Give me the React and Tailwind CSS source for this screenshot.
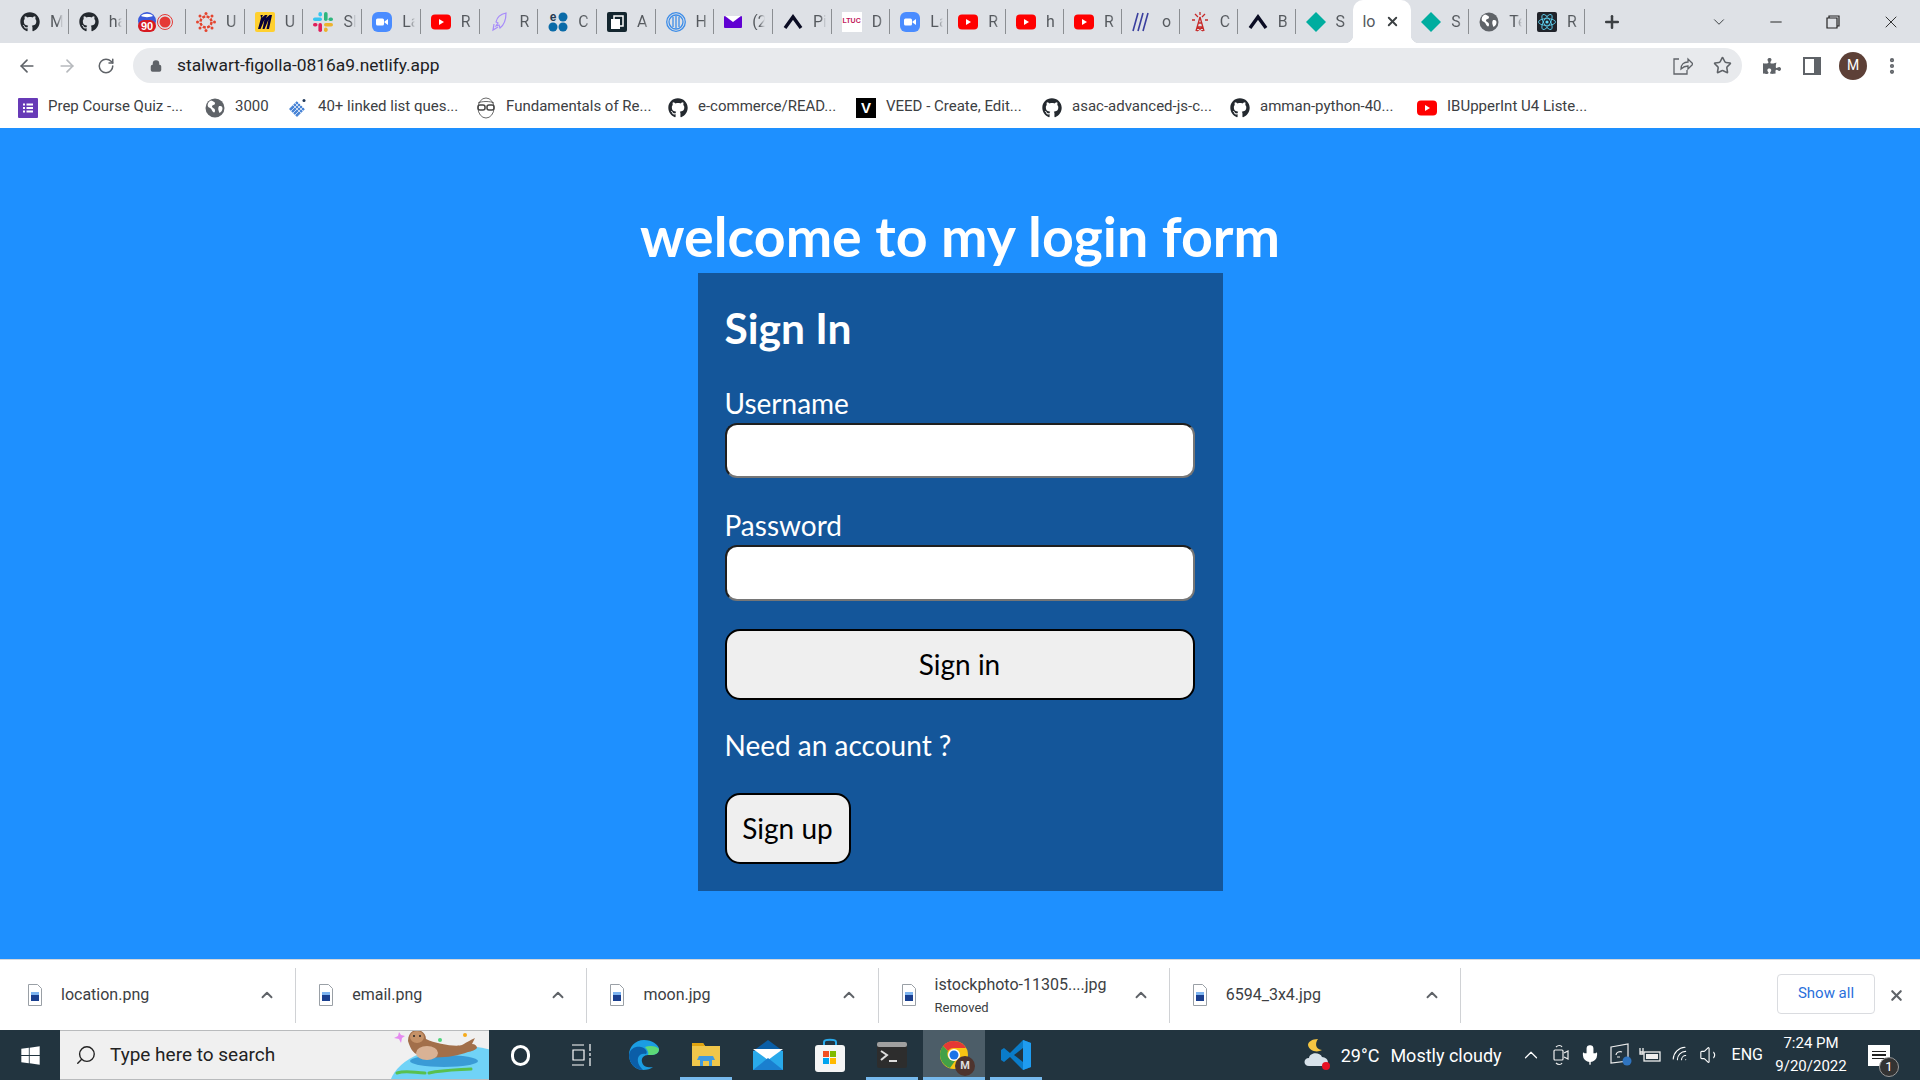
import { ArrowLeft, ArrowRight, RotateCw, Lock, Star, ChevronDown, ChevronUp, Minus, X, Plus, Search, MoreVertical, Mic, Volume1, Wifi } from "lucide-react";
import { FaGithub, FaPuzzlePiece, FaWindows } from "react-icons/fa";

function ZoomIcon() {
  return (
    <svg width="20" height="20" viewBox="0 0 20 20">
      <rect width="20" height="20" rx="6" fill="#4a8cff" />
      <rect x="4" y="6.500" width="8" height="7" rx="1.500" fill="#fff" />
      <path d="M12.500 9.500 16 7v6l-3.500-2.500z" fill="#fff" />
    </svg>
  );
}

function YoutubeIcon() {
  return (
    <svg width="20" height="20" viewBox="0 0 20 20">
      <rect y="2.500" width="20" height="15" rx="4" fill="#f00" />
      <path d="M8 7l5 3-5 3z" fill="#fff" />
    </svg>
  );
}

function Diamond() {
  return (
    <svg width="20" height="20" viewBox="0 0 20 20">
      <path d="M10 0l10 10-10 10L0 10z" fill="#00ad9f" />
    </svg>
  );
}

function Caret() {
  return (
    <svg width="20" height="20" viewBox="0 0 20 20">
      <path d="M2 16 10 5l8 11" fill="none" stroke="#0b0d24" strokeWidth="3.400" />
    </svg>
  );
}

function GlobeIcon({ size = 20 }) {
  return (
    <svg width={size} height={size} viewBox="0 0 20 20">
      <circle cx="10" cy="10" r="9.500" fill="#5f6368" />
      <path d="M6 2.500c2 1 4 1 4 3s-3 1-3 3 3 1 3 4-2 2-3 0-1-2-3-3-2-5 2-7zM14 8c2 0 3 0 3.500 2 0 2-1 4-3 5-1-2-2-5-.5-7z" fill="#fff" />
    </svg>
  );
}

function Favicon({ kind }) {
  switch (kind) {
    case "github":
      return <FaGithub size={20} color="#24292f" />;
    case "ninety":
      return (
        <span className="flex items-center">
          <svg width="20" height="20" viewBox="0 0 20 20">
            <circle cx="10" cy="9" r="9" fill="#3b5bdb" />
            <path d="M4 4c2-3 10-3 12 0-3 1.500-9 1.500-12 0z" fill="#fff" />
            <rect x="1" y="8" width="18" height="12" rx="6" fill="#d71921" />
            <text x="10" y="18" textAnchor="middle" fontSize="11" fontWeight="700" fill="#fff" fontFamily="Liberation Sans">90</text>
          </svg>
          <svg width="16" height="16" viewBox="0 0 16 16">
            <circle cx="8" cy="8" r="7.500" fill="none" stroke="#e53935" />
            <circle cx="8" cy="8" r="5.500" fill="#e53935" />
          </svg>
        </span>
      );
    case "canvas":
      return (
        <svg width="20" height="20" viewBox="0 0 20 20" fill="#e4452f">
          <circle cx="10" cy="10" r="5.500" fill="none" stroke="#e4452f" strokeWidth="2.500" strokeDasharray="3 1.300" />
          <circle cx="10" cy="1.500" r="1.500" />
          <circle cx="10" cy="18.500" r="1.500" />
          <circle cx="1.500" cy="10" r="1.500" />
          <circle cx="18.500" cy="10" r="1.500" />
          <circle cx="4" cy="4" r="1.500" />
          <circle cx="16" cy="4" r="1.500" />
          <circle cx="4" cy="16" r="1.500" />
          <circle cx="16" cy="16" r="1.500" />
        </svg>
      );
    case "miro":
      return (
        <svg width="20" height="20" viewBox="0 0 20 20">
          <rect width="20" height="20" rx="2" fill="#ffd02f" />
          <path d="M5.500 3H8L6.500 6 10 3h2.500L11 6l3.500-3H17l-3 14h-2.500l2-9.500-4 9.500H7.500l2-9.500-4 9.500H3L6 6z" fill="#050038" />
        </svg>
      );
    case "slack":
      return (
        <svg width="20" height="20" viewBox="0 0 20 20">
          <g fill="#36c5f0">
            <rect x="0" y="5.400" width="9" height="3.600" rx="1.800" />
            <rect x="5.400" y="0" width="3.600" height="4.500" rx="1.800" />
          </g>
          <g fill="#2eb67d">
            <rect x="11" y="0" width="3.600" height="9" rx="1.800" />
            <rect x="15.500" y="5.400" width="4.500" height="3.600" rx="1.800" />
          </g>
          <g fill="#ecb22e">
            <rect x="11" y="11" width="9" height="3.600" rx="1.800" />
            <rect x="11" y="15.500" width="3.600" height="4.500" rx="1.800" />
          </g>
          <g fill="#e01e5a">
            <rect x="5.400" y="11" width="3.600" height="9" rx="1.800" />
            <rect x="0" y="11" width="4.500" height="3.600" rx="1.800" />
          </g>
        </svg>
      );
    case "zoom":
      return <ZoomIcon />;
    case "youtube":
      return <YoutubeIcon />;
    case "rocket":
      return (
        <svg width="20" height="20" viewBox="0 0 20 20" fill="none" stroke="#a78bfa" strokeWidth="1.200">
          <path d="M16 1c-5 1-9 4-10 9l2 1-2 3 3-1 1 3c4-3 6-8 6-15zM4 12l-1 6 5-3" />
        </svg>
      );
    case "dots":
      return (
        <svg width="20" height="20" viewBox="0 0 20 20" fill="#0a6ba8">
          <circle cx="15" cy="5" r="4.500" />
          <circle cx="5" cy="15" r="4.500" />
          <circle cx="15" cy="15" r="4.500" />
          <text x="5" y="8.500" textAnchor="middle" fontSize="12" fontWeight="700" fill="#233a52" fontFamily="Liberation Sans">e</text>
        </svg>
      );
    case "pages":
      return (
        <svg width="20" height="20" viewBox="0 0 20 20">
          <rect width="20" height="20" rx="2" fill="#14262f" />
          <rect x="7" y="4" width="9" height="10" fill="none" stroke="#fff" strokeWidth="1.500" />
          <rect x="4" y="7" width="9" height="10" fill="#fff" />
        </svg>
      );
    case "hcircle":
      return (
        <svg width="20" height="20" viewBox="0 0 20 20" fill="none" stroke="#3d8de8" strokeWidth="1.300">
          <circle cx="10" cy="10" r="9.300" />
          <circle cx="10" cy="10" r="7" />
          <path d="M7 5v10M10 4v12M13 5v10" />
        </svg>
      );
    case "mail":
      return (
        <svg width="18" height="20" viewBox="0 0 18 20">
          <rect y="4" width="18" height="12" rx="1" fill="#6001d2" />
          <path d="M1 4h16l-8 6z" fill="#fff" />
        </svg>
      );
    case "caret":
      return <Caret />;
    case "ltuc":
      return (
        <span className="flex items-center justify-center w-[20px] h-[20px] bg-white">
          <span className="text-[7px] font-bold text-[#c2185b] font-['Liberation_Sans',sans-serif]">LTUC</span>
        </span>
      );
    case "slashes":
      return (
        <svg width="20" height="20" viewBox="0 0 20 20" fill="none" stroke="#3a3f9e" strokeWidth="1.600">
          <path d="M1 19 6 1M6 19 11 1M11 19 16 1" />
        </svg>
      );
    case "tower":
      return (
        <svg width="20" height="20" viewBox="0 0 20 20" fill="none" stroke="#c62828" strokeWidth="1.300">
          <path d="M10 5 6 19M10 5l4 14M8 11h4M7 15h6M7 15l6 4M13 15l-6 4M5 2l3 3M15 2l-3 3M2 8h3M18 8h-3M10 0v3" />
        </svg>
      );
    case "diamond":
      return <Diamond />;
    case "globe":
      return <GlobeIcon />;
    case "react":
      return (
        <svg width="20" height="20" viewBox="0 0 20 20">
          <rect width="20" height="20" rx="2" fill="#20232a" />
          <g fill="none" stroke="#61dafb" strokeWidth=".8">
            <ellipse cx="10" cy="10" rx="8.500" ry="3.400" />
            <ellipse cx="10" cy="10" rx="8.500" ry="3.400" transform="rotate(60 10 10)" />
            <ellipse cx="10" cy="10" rx="8.500" ry="3.400" transform="rotate(120 10 10)" />
          </g>
          <circle cx="10" cy="10" r="1.600" fill="#61dafb" />
        </svg>
      );
    default:
      return null;
  }
}

const tabs = [
  ["github", "M"], ["github", "ha"], ["ninety", ""], ["canvas", "U"], ["miro", "U"], ["slack", "Sl"], ["zoom", "La"],
  ["youtube", "R"], ["rocket", "R"], ["dots", "C"], ["pages", "A"], ["hcircle", "H"], ["mail", "(2"], ["caret", "Pi"],
  ["ltuc", "D"], ["zoom", "La"], ["youtube", "R"], ["youtube", "h"], ["youtube", "R"], ["slashes", "o"], ["tower", "C"],
  ["caret", "B"], ["diamond", "S"], ["active", "lo"], ["diamond", "S"], ["globe", "Te"], ["react", "R"],
];

function TabItem({ kind, letter, wide, noLine }) {
  const width = wide ? "w-[58.700px]" : "w-[57.900px]";
  const line = noLine ? "" : "border-r border-[#8b8e92]";
  return (
    <div className={`flex items-center ${width} h-[25px] pl-[10px] gap-[10px] shrink-0 overflow-hidden ${line}`}>
      <span className="shrink-0 flex"><Favicon kind={kind} /></span>
      <span className="text-[16px] leading-none w-[13px] overflow-hidden whitespace-nowrap shrink-0 [mask-image:linear-gradient(to_right,black_55%,transparent)]">{letter}</span>
    </div>
  );
}

function TabStrip() {
  return (
    <div className="flex items-center h-[43px] bg-[#dee1e6] pl-[10px] shrink-0 text-[#55595e]">
      {tabs.map(([kind, letter], i) =>
        kind === "active" ? (
          <div key={i} className="relative flex items-center w-[57.900px] h-[43px] bg-white rounded-t-[10px] pl-[9px] gap-[8px] shrink-0">
            <span className="absolute -left-[8px] bottom-0 w-[8px] h-[8px] bg-[radial-gradient(circle_at_0_0,transparent_8px,white_8.500px)]" />
            <span className="absolute -right-[8px] bottom-0 w-[8px] h-[8px] bg-[radial-gradient(circle_at_100%_0,transparent_8px,white_8.500px)]" />
            <span className="text-[16px] w-[15px] overflow-hidden">{letter}</span>
            <X size={15} strokeWidth={3} color="#3c4043" />
          </div>
        ) : (
          <TabItem key={i} kind={kind} letter={letter} wide={i < 15} noLine={tabs[i + 1]?.[0] === "active"} />
        )
      )}
      <Plus size={20} strokeWidth={3} color="#3c4043" className="ml-[17px] shrink-0" />
      <div className="flex items-center ml-auto">
        <ChevronDown size={18} strokeWidth={1.300} color="#3c4043" className="mr-[39px]" />
        <Minus size={18} strokeWidth={1.300} color="#222" className="mr-[41px]" />
        <svg width="14" height="14" viewBox="0 0 14 14" fill="none" stroke="#222" strokeWidth="1.200" className="mr-[41px]">
          <path d="M3 3V1h10v10h-2M1 3h10v10H1z" />
        </svg>
        <X size={20} strokeWidth={1.100} color="#222" className="mr-[19px]" />
      </div>
    </div>
  );
}

function Toolbar() {
  return (
    <div className="flex items-center h-[45px] pl-[17px] bg-white shrink-0 text-[#5f6368]">
      <ArrowLeft size={20} strokeWidth={2} className="mr-[20px]" />
      <ArrowRight size={20} strokeWidth={2} color="#b6b9bd" className="mr-[20px]" />
      <RotateCw size={18} strokeWidth={2} className="mr-[18px]" />
      <div className="flex items-center h-[35px] w-[1609px] rounded-full bg-[#e8eaed] pl-[17px]">
        <Lock size={12} strokeWidth={3} fill="#5f6368" />
        <span className="ml-[15px] text-[17.400px] text-[#202124] w-[262px] whitespace-nowrap">stalwart-figolla-0816a9.netlify.app</span>
        <svg width="20" height="18" viewBox="0 0 20 18" fill="none" stroke="#5f6368" strokeWidth="1.300" className="ml-[1234px]">
          <path d="M6 2H1v15h13v-4M8 12c0-5 3-7 7-7V2l5 5-5 5V9c-3 0-5 1-7 3z" />
        </svg>
        <Star size={19} strokeWidth={2} className="ml-[20px]" />
      </div>
      <FaPuzzlePiece size={18} className="ml-[21px]" />
      <svg width="18" height="18" viewBox="0 0 18 18" className="ml-[22px]">
        <rect x="1" y="1" width="16" height="16" fill="none" stroke="#5f6368" strokeWidth="2" />
        <rect x="11" y="1" width="6" height="16" fill="#5f6368" />
      </svg>
      <span className="flex items-center justify-center w-[28px] h-[28px] rounded-full bg-[#5d4037] text-white text-[14px] ml-[18px]">M</span>
      <MoreVertical size={20} strokeWidth={3} className="ml-[15px]" />
    </div>
  );
}

const bookmarks = [
  { icon: "forms", label: "Prep Course Quiz -...", w: "w-[137px]" },
  { icon: "globe", label: "3000", w: "w-[33px]" },
  { icon: "linked", label: "40+ linked list ques...", w: "w-[138px]" },
  { icon: "glasses", label: "Fundamentals of Re...", w: "w-[142px]" },
  { icon: "github", label: "e-commerce/READ...", w: "w-[138px]" },
  { icon: "veed", label: "VEED - Create, Edit...", w: "w-[136px]" },
  { icon: "github", label: "asac-advanced-js-c...", w: "w-[138px]" },
  { icon: "github", label: "amman-python-40...", w: "w-[137px]" },
  { icon: "youtube", label: "IBUpperInt U4 Liste...", w: "w-[138px]" },
];

function BookmarkIcon({ icon }) {
  if (icon === "forms")
    return (
      <svg width="20" height="20" viewBox="0 0 20 20">
        <rect width="20" height="20" rx="1" fill="#673ab7" />
        <path d="M5 5.500h2v2H5zM8.500 5.500H15v2H8.500zM5 9h2v2H5zM8.500 9H15v2H8.500zM5 12.500h2v2H5zM8.500 12.500H15v2H8.500z" fill="#fff" />
      </svg>
    );
  if (icon === "linked")
    return (
      <svg width="20" height="20" viewBox="0 0 20 20">
        <path d="M9 3l8 8-8 8-8-8z" fill="#4a85d6" />
        <path d="M5 7l8 8M7 5l8 8M9 3l8 8M5 15l8-8M7 17l8-8M3 13l8-8" stroke="#fff" strokeWidth=".7" />
        <circle cx="16" cy="2.500" r="1.500" fill="#1d3557" />
      </svg>
    );
  if (icon === "glasses")
    return (
      <svg width="20" height="24" viewBox="0 0 20 24" fill="none" stroke="#444">
        <ellipse cx="10" cy="12" rx="8" ry="10" strokeWidth=".8" />
        <path d="M2 7c4-2 12-2 16 0" strokeWidth=".8" />
        <rect x="2" y="9" width="7" height="5" rx="2" strokeWidth="1.500" />
        <rect x="11" y="9" width="7" height="5" rx="2" strokeWidth="1.500" />
      </svg>
    );
  if (icon === "veed")
    return (
      <span className="flex items-center justify-center w-[20px] h-[20px] bg-black text-white text-[15px] font-bold font-['Liberation_Sans',sans-serif]">V</span>
    );
  return <Favicon kind={icon} />;
}

function BookmarksBar() {
  return (
    <div className="flex items-center h-[40px] pl-[18px] gap-[20px] bg-white shrink-0 text-[#3c4043]">
      {bookmarks.map((b) => (
        <div key={b.label} className="flex items-center gap-[10px] shrink-0">
          <span className="flex"><BookmarkIcon icon={b.icon} /></span>
          <span className={`${b.w} text-[15px] leading-[20px] -mt-[4px] whitespace-nowrap`}>{b.label}</span>
        </div>
      ))}
    </div>
  );
}

function LoginForm() {
  const font = "font-['Lato',sans-serif]";
  return (
    <main className={`flex-1 flex flex-col items-center bg-[#1e90ff] text-white ${font}`}>
      <h1 className="mt-[71px] h-[74px] text-[55.500px] leading-[74px] font-bold whitespace-nowrap">welcome to my login form</h1>
      <form className="flex flex-col w-[525px] h-[618px] bg-[#14569a] pl-[27px] pr-[28px]">
        <h2 className="mt-[29px] text-[42.500px] leading-[52px] font-bold">Sign In</h2>
        <label className="mt-[32px] text-[28px] leading-[34px]">Username</label>
        <input className="mt-[3px] h-[55px] w-full bg-white rounded-[12px] border-[2.500px] border-t-[#1f1f1f] border-l-[#1f1f1f] border-b-[#767676] border-r-[#767676]" />
        <label className="mt-[30px] text-[28px] leading-[34px]">Password</label>
        <input className="mt-[3px] h-[56px] w-full bg-white rounded-[12px] border-[2.500px] border-t-[#1f1f1f] border-l-[#1f1f1f] border-b-[#767676] border-r-[#767676]" />
        <button type="button" className="mt-[28px] h-[71px] w-full pb-[2px] bg-[#efefef] text-black text-[28px] rounded-[15px] border-[2.500px] border-black">Sign in</button>
        <p className="mt-[27px] text-[28px] leading-[36px]">Need an account ?</p>
        <button type="button" className="mt-[30px] h-[71px] w-[126px] pb-[2px] bg-[#efefef] text-black text-[28px] rounded-[15px] border-[2.500px] border-black">Sign up</button>
      </form>
    </main>
  );
}

function FileIcon() {
  return (
    <svg width="14" height="22" viewBox="0 0 14 22">
      <path d="M.5.5h9l4 4v17H.5z" fill="#fff" stroke="#9aa0a6" />
      <rect x="3" y="8" width="8" height="9" fill="#1a3f8f" />
      <rect x="3" y="8" width="8" height="3" fill="#7db4f0" />
    </svg>
  );
}

const downloads = [
  { name: "location.png" },
  { name: "email.png" },
  { name: "moon.jpg" },
  { name: "istockphoto-11305....jpg", sub: "Removed" },
  { name: "6594_3x4.jpg" },
];

function DownloadBar() {
  return (
    <div className="flex items-center h-[71px] bg-white border-t border-[#d5d7da] shrink-0 text-[#3c4043]">
      <div className="w-[5px] shrink-0" />
      {downloads.map((d) => (
        <div key={d.name} className="flex items-center w-[291.200px] h-[55px] pl-[23px] border-r border-[#d0d2d5] shrink-0">
          <FileIcon />
          <div className="flex flex-col ml-[19px] w-[197px]">
            <span className="text-[16px] leading-[22px] whitespace-nowrap">{d.name}</span>
            {d.sub && <span className="text-[13px] leading-[18px] mt-[3px]">{d.sub}</span>}
          </div>
          <ChevronUp size={18} strokeWidth={2.500} color="#5f6368" />
        </div>
      ))}
      <button className="ml-auto w-[98px] h-[40px] -mt-[3px] border border-[#dadce0] rounded-[4px] text-[15px] text-[#2a6fdb]">Show all</button>
      <X size={17} strokeWidth={3} color="#5f6368" className="ml-[13px] mr-[15px]" />
    </div>
  );
}

function TaskSlot({ active, open, children }) {
  return (
    <div className={active ? "relative flex items-center justify-center w-[62px] h-[50px] bg-[#4c5d68]" : "relative flex items-center justify-center w-[62px] h-[50px]"}>
      {children}
      {open && <span className={active ? "absolute bottom-0 left-0 right-0 h-[3px] bg-[#76b9ed]" : "absolute bottom-0 left-[5px] right-[5px] h-[3px] bg-[#76b9ed]"} />}
    </div>
  );
}

function Otter() {
  return (
    <svg width="100" height="50" viewBox="0 0 100 50">
      <ellipse cx="72" cy="60" rx="72" ry="43" fill="#70d3f7" />
      <ellipse cx="55" cy="32" rx="34" ry="6" fill="#3a9bd6" />
      <path d="M19 12c0-7 4-11 9-11s9 4 9 9c10 5 30 8 36 6 5-3 11-6 13-7l-3 6c3 0 5 2 5 4-3 3-5 3-9 4-15 6-38 7-50 3-5-2-8-7-10-14z" fill="#a26f4a" />
      <ellipse cx="28" cy="8" rx="7" ry="6" fill="#c59268" />
      <ellipse cx="38" cy="24" rx="11" ry="7" fill="#d9b295" />
      <circle cx="25" cy="7" r="1" fill="#222" />
      <circle cx="31" cy="7" r="1" fill="#222" />
      <path d="M8 44c10-3 18 0 28 0M40 44c14-3 26-3 42-4" stroke="#58c04f" strokeWidth="3" fill="none" strokeLinecap="round" />
      <path d="M10 3l2 3 4 1-3 2-1 5-2-4-5-1 4-2z" fill="#e58af0" />
      <circle cx="51" cy="11" r="2" fill="#4fd47c" />
      <circle cx="76" cy="6" r="2" fill="#f6ab1b" />
    </svg>
  );
}

function Taskbar() {
  return (
    <div className="flex items-center h-[50px] bg-[#22343f] shrink-0 text-white">
      <div className="flex items-center justify-center w-[60px] h-full">
        <FaWindows size={21} />
      </div>
      <div className="relative flex items-center w-[429px] h-full bg-[#f0f0f0] border-y border-[#b9bbbd] pl-[15px] text-[#222] overflow-hidden">
        <Search size={22} strokeWidth={1.500} className="-scale-x-100" />
        <span className="ml-[13px] text-[19px]">Type here to search</span>
        <span className="absolute right-0 bottom-0 flex"><Otter /></span>
      </div>
      <TaskSlot>
        <span className="w-[19px] h-[21px] rounded-full border-[3px] border-white" />
      </TaskSlot>
      <TaskSlot>
        <svg width="20" height="22" viewBox="0 0 20 22" fill="none" stroke="#fff" strokeWidth="1.200">
          <path d="M0 1h12M0 21h12M1 6h11v10H1zM18 0v7M18 14v8M18 9v3" />
        </svg>
      </TaskSlot>
      <TaskSlot>
        <svg width="32" height="32" viewBox="0 0 32 32">
          <path d="M16 1C7 1 1 8 1 16c0 9 7 15 14 15 4 0 8-1 10-3-4 1-10 0-11-5-1-4 2-7 6-7 5 0 11 0 11-6C31 6 24 1 16 1z" fill="#1b9de2" />
          <path d="M1 16C2 9 8 7 13 8c5 1 7 5 5 7-3-1-7 0-8 4-1 5 2 9 5 12C7 31 1 24 1 16z" fill="#0b5ea8" />
          <path d="M31 10c0 6-6 6-11 6 1-2 0-5-3-8 5-2 12-1 14 2z" fill="#5dd977" />
        </svg>
      </TaskSlot>
      <TaskSlot open>
        <svg width="28" height="28" viewBox="0 0 28 28">
          <path d="M0 2h11l2 3h15v20H0z" fill="#f0c64a" />
          <path d="M0 2h11l2 3H0z" fill="#e0a410" />
          <path d="M7 15h14l2 4h-3v6H8v-6H5z" fill="#3f9ae0" />
          <rect x="11" y="20" width="6" height="5" fill="#f0c64a" />
        </svg>
      </TaskSlot>
      <TaskSlot>
        <svg width="30" height="30" viewBox="0 0 30 30">
          <path d="M15 0 30 11H0z" fill="#0a5ea6" />
          <rect y="11" width="30" height="19" fill="#29a9ea" />
          <path d="M0 9h30L15 20z" fill="#fff" />
          <path d="M0 30 15 18l15 12z" fill="#1a7fcf" />
        </svg>
      </TaskSlot>
      <TaskSlot>
        <svg width="30" height="34" viewBox="0 0 30 34">
          <path d="M9 8V4c0-3 12-3 12 0v4" fill="none" stroke="#29a9ea" strokeWidth="2" />
          <rect y="7" width="30" height="27" rx="3" fill="#f5f5f5" />
          <rect x="8" y="13" width="6" height="6" fill="#f25022" />
          <rect x="15" y="13" width="6" height="6" fill="#7fba00" />
          <rect x="8" y="20" width="6" height="6" fill="#00a4ef" />
          <rect x="15" y="20" width="6" height="6" fill="#ffb900" />
        </svg>
      </TaskSlot>
      <TaskSlot open>
        <svg width="30" height="26" viewBox="0 0 30 26">
          <rect width="30" height="26" rx="2" fill="#2d2d2d" />
          <rect width="30" height="5" rx="2" fill="#a0a0a0" />
          <path d="M4 9l6 4-6 5" fill="none" stroke="#ddd" strokeWidth="2" />
          <path d="M12 19h8" stroke="#ddd" strokeWidth="2" />
        </svg>
      </TaskSlot>
      <TaskSlot active open>
        <span className="relative flex">
          <svg width="30" height="30" viewBox="0 0 30 30">
            <circle cx="15" cy="15" r="14" fill="#f9c513" />
            <path d="M15 1a14 14 0 0 1 12 7H15a7 7 0 0 0-6 3L4 6a14 14 0 0 1 11-5z" fill="#e53935" />
            <path d="M4 6a14 14 0 0 0 7 22l5-7a7 7 0 0 1-7-10z" fill="#43a047" />
            <circle cx="15" cy="15" r="6" fill="#fff" />
            <circle cx="15" cy="15" r="4.500" fill="#1a73e8" />
          </svg>
          <span className="absolute -right-[6px] -bottom-[6px] w-[20px] h-[20px] rounded-full bg-[#4e342e] text-[11px] text-[#ddd] flex items-center justify-center font-bold">M</span>
        </span>
      </TaskSlot>
      <TaskSlot open>
        <svg width="30" height="30" viewBox="0 0 30 30">
          <path d="M22 0 9 13 3 8 0 10v10l3 2 6-5 13 13 8-3V3z" fill="#0a7cc9" />
          <path d="M22 8v14l-9-7z" fill="#22343f" />
          <path d="M22 0l8 3v24l-8 3z" fill="#1f9cf0" />
        </svg>
      </TaskSlot>
      <div className="flex items-center ml-auto h-full">
        <svg width="30" height="34" viewBox="0 0 30 34">
          <path d="M15 1c-3 4-3 10 4 11-5 3-13 1-14-5 0-3 4-6 10-6z" fill="#f5c542" />
          <path d="M6 28c-6 0-6-8 0-8 1-6 11-6 13-1 7 0 8 9 2 9z" fill="#d8e2ea" />
          <circle cx="23" cy="28" r="4" fill="#e81123" />
        </svg>
        <span className="ml-[8px] text-[18px] whitespace-nowrap">29°C</span>
        <span className="ml-[11px] text-[18px] whitespace-nowrap">Mostly cloudy</span>
        <ChevronUp size={22} strokeWidth={1.300} className="ml-[18px]" />
        <svg width="16" height="22" viewBox="0 0 16 22" fill="none" stroke="#eee" strokeWidth="1.200" className="ml-[11px]">
          <rect x="1" y="6" width="9" height="10" rx="1" />
          <path d="M11 9l4-2v8l-4-2M3 3c2-2 5-2 6 0M3 19c2 2 5 2 6 0" />
        </svg>
        <Mic size={22} strokeWidth={1.500} fill="#fff" className="ml-[10px]" />
        <svg width="22" height="24" viewBox="0 0 22 24" fill="none" stroke="#eee" strokeWidth="1.200" className="ml-[9px]">
          <path d="M1 4l17-3v17L1 20z" />
          <path d="M6 12c0-3 4-4 6-3M10 14l-3 0" />
          <circle cx="17" cy="18" r="4.500" fill="#2f74c0" stroke="none" />
        </svg>
        <svg width="22" height="16" viewBox="0 0 22 16" fill="none" stroke="#eee" strokeWidth="1.300" className="ml-[7px]">
          <rect x="5" y="5" width="16" height="9" />
          <rect x="7" y="7" width="12" height="5" fill="#eee" stroke="none" />
          <path d="M1 1v4M4 1v4M1 5h3v2H1z" />
        </svg>
        <Wifi size={20} strokeWidth={1.300} className="ml-[10px] -rotate-45" />
        <Volume1 size={22} strokeWidth={1.200} className="ml-[8px]" />
        <span className="ml-[11px] text-[16px] whitespace-nowrap">ENG</span>
        <div className="flex flex-col items-center ml-[12px] w-[72px] text-[15px] leading-[23px] whitespace-nowrap">
          <span>7:24 PM</span>
          <span>9/20/2022</span>
        </div>
        <span className="relative ml-[21px] mr-[30px] w-[22px] h-[21px] bg-white flex flex-col justify-center gap-[2px] px-[4px]">
          <span className="h-[1.500px] bg-[#222]" />
          <span className="h-[1.500px] bg-[#222]" />
          <span className="h-[1.500px] bg-[#222]" />
          <span className="absolute -right-[9px] -bottom-[11px] w-[20px] h-[20px] rounded-full bg-[#333] border border-[#999] text-[13px] text-white flex items-center justify-center">1</span>
        </span>
      </div>
    </div>
  );
}

export default function App() {
  return (
    <div className="flex flex-col w-[1920px] h-[1080px] overflow-hidden font-['Roboto',sans-serif]">
      <TabStrip />
      <Toolbar />
      <BookmarksBar />
      <LoginForm />
      <DownloadBar />
      <Taskbar />
    </div>
  );
}
